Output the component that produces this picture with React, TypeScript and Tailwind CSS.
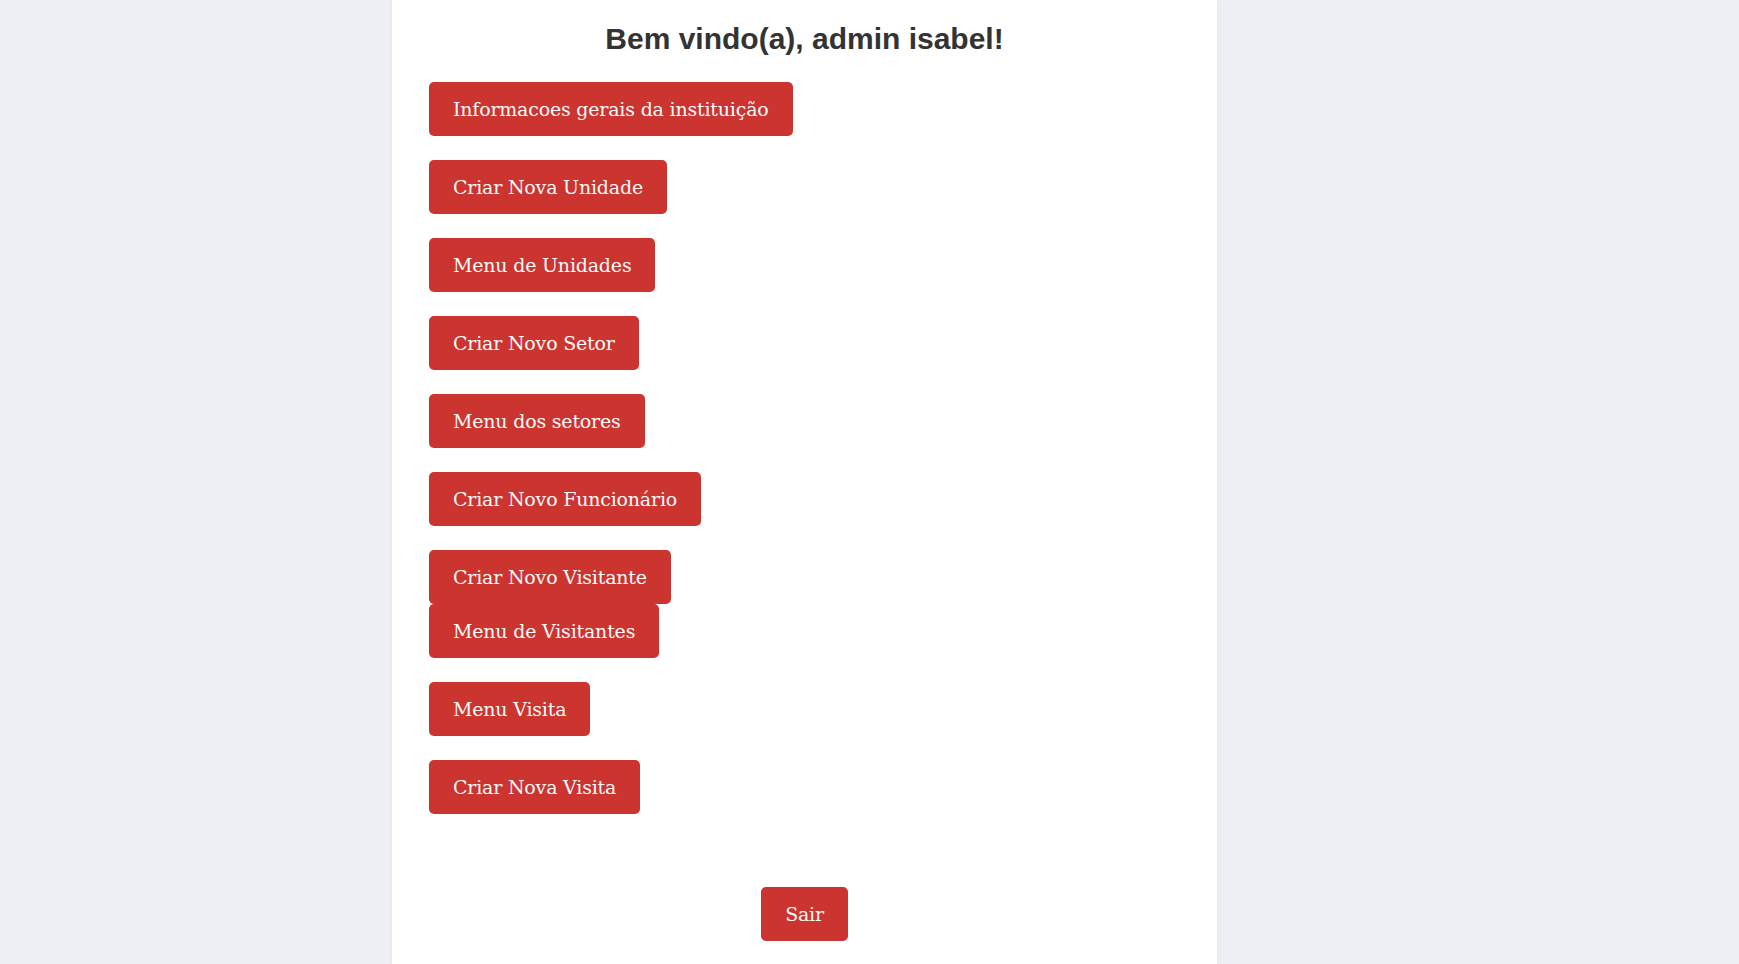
const menuItems: string[][] = [
    ["Informacoes gerais da instituição"],
    ["Criar Nova Unidade"],
    ["Menu de Unidades"],
    ["Criar Novo Setor"],
    ["Menu dos setores"],
    ["Criar Novo Funcionário"],
    // these two sit in the same block, so no gap between them
    ["Criar Novo Visitante", "Menu de Visitantes"],
    ["Menu Visita"],
    ["Criar Nova Visita"],
];

function RedButton({ label }: { label: string }) {
    return (
        <button
            type="button"
            className="h-[54px] rounded-[5px] bg-[#cc342f] px-[24px] text-[19px] leading-[30px] tracking-[-0.2px] text-[#fafafa] [font-family:'DejaVu_Serif',serif]"
        >
            {label}
        </button>
    );
}

export default function App() {
    return (
        <div className="min-h-screen bg-[#eff0f5] [font-family:'Liberation_Sans',Arial,sans-serif]">
            <div className="ml-[392px] min-h-screen w-[825px] bg-white px-[37px] pt-[22px] shadow-[0_0_6px_rgba(0,0,0,0.06)]">
                <h1 className="mb-[27px] text-center text-[30px] font-bold leading-[33px] text-[#333333]">
                    Bem vindo(a), admin isabel!
                </h1>

                <div className="flex flex-col gap-[24px]">
                    {menuItems.map((group) => (
                        <div key={group[0]} className="flex flex-col items-start">
                            {group.map((label) => (
                                <RedButton key={label} label={label} />
                            ))}
                        </div>
                    ))}
                </div>

                <div className="flex justify-center pt-[73px] pb-[24px]">
                    <RedButton label="Sair" />
                </div>
            </div>
        </div>
    );
}
